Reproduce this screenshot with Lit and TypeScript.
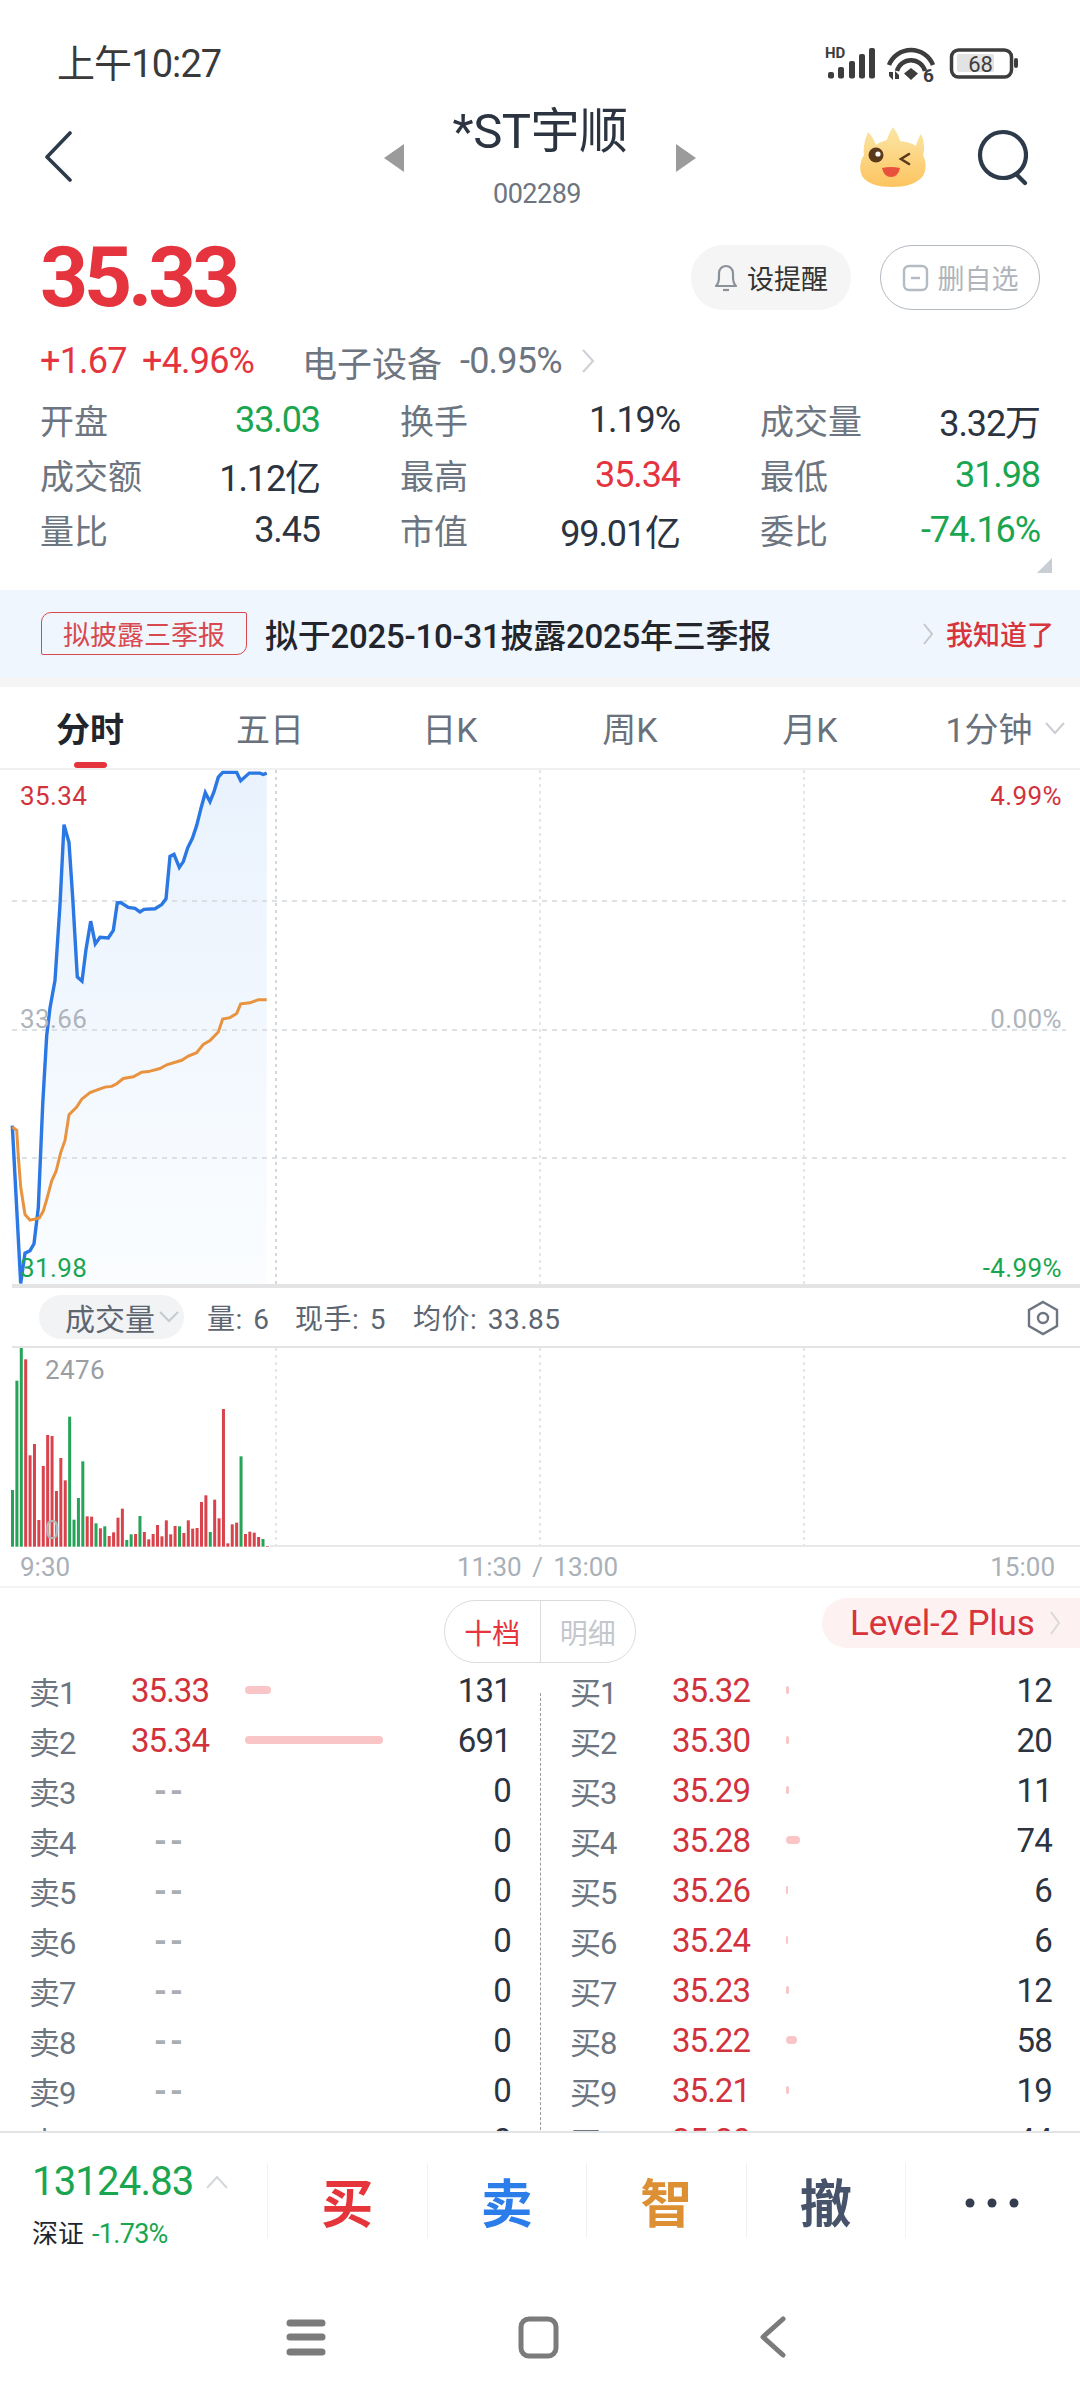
import { LitElement, html, css, svg } from 'lit';
import { customElement } from 'lit/decorators.js';

const RED = css`#e5343d`;
const GREEN = css`#1aa650`;

// traced off the reference, 1 unit = 1px horizontally, 2.904 units = 1px vertically from y=760
const pt = (p: number[]) => `${(p[0] / 3).toFixed(1)},${(760 + p[1] / 2.904).toFixed(1)}`;
const blue = [[37,1062],[62,1520],[75,1432],[90,1425],[102,1405],[115,1300],[128,1000],[140,800],[150,720],[165,640],[180,420],[192,188],[207,240],[218,400],[232,630],[246,642],[258,550],[272,468],[286,534],[300,515],[325,517],[340,495],[352,415],[362,414],[385,428],[405,431],[420,441],[432,434],[465,432],[485,420],[498,403],[510,280],[522,274],[538,312],[550,295],[563,255],[577,228],[590,190],[603,140],[616,95],[630,121],[642,92],[655,50],[668,36],[710,36],[722,60],[748,38],[780,38],[790,42],[800,38]];
const orange = [[37,1066],[50,1075],[55,1150],[62,1240],[75,1320],[90,1336],[105,1333],[118,1330],[130,1310],[142,1270],[155,1222],[168,1195],[182,1140],[195,1105],[207,1030],[230,1008],[245,985],[270,966],[300,955],[315,950],[335,948],[350,940],[370,925],[400,920],[425,907],[445,905],[480,896],[500,885],[545,872],[565,860],[590,850],[610,826],[630,815],[655,790],[668,752],[690,748],[710,736],[722,708],[750,705],[775,696],[800,696]];

// [top in zoom px, 1 = red / 0 = green]
const vols: [number, number][] = [[660,0],[332,0],[232,0],[268,1],[556,1],[522,1],[750,1],[588,1],[495,1],[498,1],[663,1],[564,1],[631,1],[440,0],[749,0],[684,0],[574,0],[739,1],[740,1],[760,0],[775,1],[769,0],[798,1],[787,1],[743,1],[716,1],[810,0],[793,0],[792,1],[738,0],[786,1],[808,1],[792,1],[765,1],[799,1],[751,1],[793,1],[768,1],[769,0],[789,1],[751,1],[776,1],[774,1],[696,1],[676,1],[786,0],[689,1],[745,1],[417,1],[820,1],[763,1],[758,1],[559,0],[792,1],[785,1],[788,1],[801,1],[807,0],[828,1]];

const stats = [
  ['开盘', '33.03', 'g'], ['换手', '1.19%', ''], ['成交量', '3.32万', ''],
  ['成交额', '1.12亿', ''], ['最高', '35.34', 'r'], ['最低', '31.98', 'g'],
  ['量比', '3.45', ''], ['市值', '99.01亿', ''], ['委比', '-74.16%', 'g'],
];

const asks: [string, number, number][] = [['35.33', 131, 26], ['35.34', 691, 138], ['--', 0, 0], ['--', 0, 0], ['--', 0, 0], ['--', 0, 0], ['--', 0, 0], ['--', 0, 0], ['--', 0, 0], ['--', 0, 0]];
const bids: [string, number, number][] = [['35.32', 12, 3], ['35.30', 20, 3], ['35.29', 11, 3], ['35.28', 74, 14], ['35.26', 6, 2], ['35.24', 6, 2], ['35.23', 12, 3], ['35.22', 58, 11], ['35.21', 19, 3], ['35.20', 44, 8]];

@customElement('app-root')
export class AppRoot extends LitElement {
  static styles = css`
    :host {
      display: flex;
      flex-direction: column;
      width: 1080px;
      height: 2400px;
      overflow: hidden;
      background: #fff;
      font-family: Roboto, "Noto Sans CJK SC", sans-serif;
      color: #2b3440;
    }
    svg { display: block; }
    .r { color: ${RED}; }
    .g { color: ${GREEN}; }

    .status {
      height: 92px;
      flex: none;
      display: flex;
      align-items: flex-start;
      justify-content: space-between;
      padding: 39px 60px 0 57px;
      box-sizing: border-box;
    }
    .clock { font-size: 38px; line-height: 46px; letter-spacing: -0.9px; color: #3a3a3a; margin-top: 2px; }
    .status svg { margin-top: -1px; }

    .nav {
      height: 130px;
      flex: none;
      position: relative;
      display: flex;
      align-items: flex-start;
      justify-content: center;
    }
    .nav .back { position: absolute; left: 42px; top: 38px; }
    .nav .tools { position: absolute; left: 855px; top: 32px; display: flex; gap: 42px; align-items: flex-start; }
    .titlewrap { display: flex; align-items: flex-start; margin-top: 12px; }
    .tri { margin-top: 40px; }
    .title { text-align: center; width: 272px; }
    .title b { display: block; font-weight: 400; font-size: 49px; line-height: 56px; letter-spacing: -0.5px; color: #2b3440; }
    .title span { display: block; font-size: 27px; line-height: 30px; margin-top: 19px; margin-right: 6px; color: #6d7580; letter-spacing: -0.5px; }

    .pricerow {
      height: 113px;
      flex: none;
      display: flex;
      justify-content: space-between;
      padding: 23px 40px 0;
      box-sizing: border-box;
    }
    .price { font-size: 84px; line-height: 66px; font-weight: 700; color: ${RED}; letter-spacing: -4.2px; }
    .btns { display: flex; gap: 29px; }
    .btn {
      width: 160px;
      height: 65px;
      border-radius: 32px;
      box-sizing: border-box;
      display: flex;
      align-items: center;
      justify-content: center;
      gap: 9px;
      font-size: 27px;
    }
    .btn.on { background: #f5f5f5; color: #333; }
    .btn.off { border: 1.5px solid #b4bbc2; color: #b0b5bb; }

    .change { height: 52px; flex: none; display: flex; align-items: center; padding: 0 0 0 40px; font-size: 36px; letter-spacing: -0.8px; }
    .change .m1 { width: 102px; }
    .change .m2 { width: 160px; }
    .change .sec { color: #6d7580; font-size: 35px; letter-spacing: 0; }
    .change .pct { color: #6d7580; margin-left: 18px; }
    .change svg { margin-left: 18px; }

    .stats {
      flex: none;
      height: 203px;
      position: relative;
      box-sizing: border-box;
      padding: 5px 40px 0;
      display: grid;
      grid-template-columns: repeat(3, 280px);
      grid-auto-rows: 55px;
      column-gap: 80px;
    }
    .stat { display: flex; justify-content: space-between; align-items: center; font-size: 34px; }
    .stat .k { color: #6d7580; }
    .stat .v { font-size: 36px; letter-spacing: -1.1px; color: #2b3440; }
    .stat .v.r { color: ${RED}; }
    .stat .v.g { color: ${GREEN}; }
    .corner { position: absolute; right: 28px; top: 171px; }

    .notice {
      height: 87px;
      flex: none;
      background: #f0f6fd;
      display: flex;
      align-items: center;
      padding: 0 26px 0 41px;
      position: relative;
    }
    .tag {
      width: 206px;
      height: 43px;
      box-sizing: border-box;
      border: 1.5px solid #d8494f;
      border-radius: 10px 2px 10px 2px;
      color: #d8494f;
      font-size: 27px;
      display: flex;
      align-items: center;
      justify-content: center;
    }
    .ntext { margin-left: 18px; font-size: 33px; letter-spacing: -0.25px; font-weight: 500; color: #22262c; flex: 1; }
    .nok { font-size: 27px; color: #d8343c; margin-left: 12px; font-weight: 500; }
    .gap { height: 10px; flex: none; background: #f5f5f5; }

    .tabs {
      height: 83px;
      flex: none;
      display: grid;
      grid-template-columns: repeat(6, 1fr);
      align-items: center;
      font-size: 34px;
      color: #69717c;
      position: relative;
      border-bottom: 2px solid #f0f0f0;
      box-sizing: border-box;
    }
    .tabs > div { text-align: center; display: flex; justify-content: center; align-items: center; gap: 12px; }
    .tabs .cur { color: #22262c; font-weight: 700; }
    .tabs .last { padding-left: 30px; }
    .tabs .ul { position: absolute; left: 74px; bottom: 0; width: 33px; height: 6px; border-radius: 3px; background: ${RED}; }

    .chart { height: 516px; flex: none; position: relative; }
    .lbl { position: absolute; font-size: 26px; line-height: 30px; letter-spacing: 0.4px; }
    .lbl.gray { color: #aeb4bb; }
    .lbl.red { color: #d2323c; }
    .lbl.grn { color: ${GREEN}; }

    .sub {
      height: 62px;
      flex: none;
      box-sizing: border-box;
      border-top: 2px solid #e4e4e4;
      border-bottom: 2px solid #e4e4e4;
      margin-left: 12px;
      display: flex;
      align-items: center;
      position: relative;
      font-size: 28px;
      letter-spacing: 0.5px;
      word-spacing: 3px;
      color: #5c6570;
    }
    .pill {
      margin-left: 27px;
      margin-right: 23px;
      width: 145px;
      height: 44px;
      border-radius: 22px;
      background: #f2f3f5;
      font-size: 30px;
      letter-spacing: 0;
      display: flex;
      align-items: center;
      justify-content: flex-end;
      gap: 3px;
      padding-right: 4px;
      box-sizing: border-box;
    }
    .sub .a { width: 88px; }
    .sub .b { width: 118px; }
    .sub svg.hex { position: absolute; right: 20px; top: 12px; }

    .vol { height: 199px; flex: none; position: relative; }
    .axis {
      height: 41px;
      flex: none;
      border-bottom: 2px solid #f3f3f3;
      display: grid;
      grid-template-columns: 1fr auto 1fr;
      align-items: center;
      padding: 0 25px 0 20px;
      font-size: 26px;
      color: #a9b0b8;
      box-sizing: border-box;
    }
    .axis .mid { word-spacing: 4px; }
    .axis .end { text-align: right; }

    .orders { height: 543px; flex: none; overflow: hidden; position: relative; }
    .ohead { height: 77px; position: relative; display: flex; justify-content: center; align-items: flex-start; }
    .seg {
      margin-top: 12px;
      width: 192px;
      height: 63px;
      box-sizing: border-box;
      border: 1.5px solid #dcdcdc;
      border-radius: 31px;
      display: flex;
      font-size: 28px;
    }
    .seg div { flex: 1; display: flex; align-items: center; justify-content: center; color: #c4c7cb; }
    .seg div:first-child { color: ${RED}; border-right: 1.5px solid #dcdcdc; }
    .level {
      position: absolute;
      right: 0;
      top: 10px;
      width: 258px;
      height: 50px;
      border-radius: 25px 0 0 25px;
      background: #fdf1f1;
      color: #d8343c;
      font-size: 35px;
      box-sizing: border-box;
      padding-left: 28px;
      display: flex;
      align-items: center;
      gap: 14px;
      letter-spacing: -0.2px;
    }
    .book { display: grid; grid-template-columns: 540px 540px; position: relative; }
    .side { display: flex; flex-direction: column; }
    .row {
      height: 50px;
      flex: none;
      display: grid;
      grid-template-columns: 101px 80px 35px 1fr auto;
      align-items: center;
      font-size: 33px;
    }
    .side.l .row { padding: 0 29px 0 29px; }
    .side.r .row { padding: 0 28px 0 30px; }
    .row .n { color: #6d7580; font-size: 31px; letter-spacing: -1px; }
    .row .p { color: #d2323c; text-align: center; letter-spacing: -1px; }
    .row .p.e { color: #a9aeb4; letter-spacing: 3px; font-weight: 700; }
    .row .q { color: #2b3440; text-align: right; letter-spacing: -0.8px; }
    .row .bar { height: 8px; border-radius: 4px; background: #f9c5c7; }
    .dash { position: absolute; left: 540px; top: 28px; bottom: 0; border-left: 1.5px dashed #9a9a9a; }

    .bottom { flex: 1; position: relative; border-top: 2px solid #e2e4e6; box-sizing: border-box; }
    .trade { height: 137px; display: flex; align-items: flex-start; padding-top: 30px; box-sizing: border-box; }
    .idx { width: 267px; flex: none; box-sizing: border-box; padding-left: 32px; margin-top: -3px; }
    .idx .top { display: flex; align-items: center; gap: 12px; font-size: 40px; line-height: 44px; letter-spacing: -0.8px; color: ${GREEN}; }
    .idx .lo { display: flex; align-items: baseline; gap: 8px; margin-top: 15px; font-size: 26px; line-height: 30px; color: #22262c; }
    .idx .lo span { color: ${GREEN}; font-size: 27px; letter-spacing: -0.7px; }
    .act {
      width: 159.5px;
      height: 75px;
      flex: none;
      border-left: 1.5px solid #f2f2f2;
      display: flex;
      align-items: center;
      justify-content: center;
      font-size: 52px;
      font-weight: 700;
      box-sizing: border-box;
    }
    .act.more { padding: 4px 0 0 14px; }
    .sys { display: flex; height: 130px; align-items: flex-start; position: relative; }
  `;

  private chartSvg() {
    const line = blue.map(pt).join(' ');
    const last = pt(blue[blue.length - 1]).split(',')[0];
    const grid = [540, 804].map(x => svg`<line x1=${x} x2=${x} y1="770" y2="1286" stroke="#dcdfe2" stroke-width="1.5" stroke-dasharray="3 4"/>`);
    return html`<svg width="1080" height="516" viewBox="0 770 1080 516">
      <defs><linearGradient id="fill" x1="0" y1="0" x2="0" y2="1">
        <stop offset="0" stop-color="#e9f2fd"/><stop offset="1" stop-color="#fbfdff"/>
      </linearGradient></defs>
      <polygon points="${line} ${last},1286 12,1286" fill="url(#fill)"/>
      ${[901, 1030, 1158].map(y => svg`<line x1="12" x2="1066" y1=${y} y2=${y} stroke="#d3d7db" stroke-width="1.5" stroke-dasharray="5 5"/>`)}
      <line x1="276" x2="276" y1="770" y2="1286" stroke="#d5d8db" stroke-width="2" stroke-dasharray="3 4"/>
      ${grid}
      <polyline points=${line} fill="none" stroke="#2b78e4" stroke-width="3.4"/>
      <polyline points=${orange.map(pt).join(' ')} fill="none" stroke="#e8933f" stroke-width="3"/>
      <line x1="12" x2="1080" y1="1285" y2="1285" stroke="#e4e4e4" stroke-width="2"/>
    </svg>`;
  }

  private volSvg() {
    return html`<svg width="1080" height="199" viewBox="0 1348 1080 199">
      ${[276, 540, 804].map(x => svg`<line x1=${x} x2=${x} y1="1348" y2="1547" stroke="#dcdfe2" stroke-width="1.5" stroke-dasharray="3 4"/>`)}
      ${vols.map(([top, up], i) => {
        const y = 1270 + top / 3;
        return svg`<rect x=${11 + i * 4.395} y=${y} width="3" height=${1546.7 - y} fill=${up ? '#d8434c' : '#28a35a'}/>`;
      })}
      <line x1="270" x2="1080" y1="1546" y2="1546" stroke="#e8e8e8" stroke-width="2"/>
    </svg>`;
  }

  private side(rows: [string, number, number][], name: string, cls: string) {
    return html`<div class="side ${cls}">
      ${rows.map(([p, q, w], i) => html`<div class="row">
        <div class="n">${name}${i + 1}</div>
        <div class="p ${p === '--' ? 'e' : ''}">${p}</div>
        <div></div>
        <div><div class="bar" style="width:${w}px"></div></div>
        <div class="q">${q}</div>
      </div>`)}
    </div>`;
  }

  render() {
    return html`
      <div class="status">
        <div class="clock">上午10:27</div>
        <svg width="200" height="50" viewBox="820 38 200 50">
          <text x="825" y="58" font-family="Roboto" font-weight="700" font-size="15" fill="#3d3d3d">HD</text>
          <g fill="#3d3d3d">
            <rect x="828" y="72" width="6" height="6.5" rx="2"/>
            <rect x="838" y="67" width="6" height="11.5" rx="2"/>
            <rect x="849" y="61" width="6" height="17.5" rx="2"/>
            <rect x="859" y="54" width="6" height="24.5" rx="2"/>
            <rect x="869" y="48" width="6" height="30.5" rx="2"/>
            <polygon points="904,73.5 911,68 918,73.5 911,80"/>
            <polygon points="889,72 893,72 893,80 889,76"/>
            <polygon points="895,71 899,75 899,79 895,79"/>
          </g>
          <g fill="none" stroke="#3d3d3d" stroke-width="4.5">
            <path d="M889 65 A23.6 23.6 0 0 1 933 65"/>
            <path d="M897 71 A14.5 14.5 0 0 1 925 71"/>
            <rect x="951.5" y="50" width="60" height="27" rx="7" stroke-width="3.5"/>
          </g>
          <text x="923" y="82" font-family="Roboto" font-weight="700" font-size="19" fill="#3d3d3d">6</text>
          <rect x="957" y="54" width="37" height="18" rx="2" fill="#e3e3e3"/>
          <text x="980.5" y="72" text-anchor="middle" font-family="Roboto" font-size="22" fill="#3d3d3d">68</text>
          <rect x="1014" y="58" width="4" height="10" rx="2" fill="#3d3d3d"/>
        </svg>
      </div>

      <div class="nav">
        <svg class="back" width="34" height="52" viewBox="0 0 34 52" fill="none" stroke="#2d3a4a" stroke-width="3.6" stroke-linecap="round" stroke-linejoin="round">
          <path d="M28 3 L5 27 L28 50"/>
        </svg>
        <div class="titlewrap">
          <svg class="tri" width="20" height="28" viewBox="0 0 20 28"><polygon points="20,0 20,28 0,14" fill="#9b9b9b"/></svg>
          <div class="title"><b>*ST宇顺</b><span>002289</span></div>
          <svg class="tri" width="20" height="28" viewBox="0 0 20 28"><polygon points="0,0 0,28 20,14" fill="#9b9b9b"/></svg>
        </div>
        <div class="tools">
          <svg width="75" height="65" viewBox="855 125 75 65">
            <defs><linearGradient id="bd" x1="0" y1="0" x2="0" y2="1">
              <stop offset="0" stop-color="#fbe6a6"/><stop offset="1" stop-color="#fdc460"/>
            </linearGradient></defs>
            <path fill="url(#bd)" d="M893 128 C896 132 899 137 900 142 C906 143 912 144 916 147 C917 142 919 138 921 135 C924 141 925 150 923 156 C927 164 926 172 923 177 C917 185 905 188 892 188 C879 188 867 185 862 177 C859 170 860 162 864 156 C863 149 865 139 868 133 C872 137 874 141 876 146 C880 143 884 142 887 141 C888 137 890 132 893 128 Z"/>
            <circle cx="876" cy="156" r="7.5" fill="#5b3a1c"/>
            <circle cx="878" cy="155" r="2.6" fill="#fff"/>
            <path d="M909 155 L901 160 L909 165" fill="none" stroke="#5b3a1c" stroke-width="2.6" stroke-linecap="round"/>
            <path d="M882 169 Q891 167 900 169 Q898 178 891 178 Q884 178 882 169 Z" fill="#e8513c"/>
          </svg>
          <svg width="56" height="65" viewBox="972 125 56 65" fill="none" stroke="#2d3a4a" stroke-width="4.2" stroke-linecap="round">
            <circle cx="1003" cy="156" r="23"/>
            <path d="M1016 175 L1025 184"/>
          </svg>
        </div>
      </div>

      <div class="pricerow">
        <div class="price">35.33</div>
        <div class="btns">
          <div class="btn on">
            <svg width="24" height="30" viewBox="0 0 24 30" fill="none" stroke="#8b9198" stroke-width="2.2" stroke-linejoin="round">
              <path d="M2 23 Q5 20 5 14 V10 A7 7 0 0 1 19 10 V14 Q19 20 22 23 Z"/><path d="M9 27 H15"/>
            </svg>设提醒
          </div>
          <div class="btn off">
            <svg width="27" height="30" viewBox="0 0 27 30" fill="none" stroke="#b4bbc2" stroke-width="2.4">
              <rect x="2" y="3" width="23" height="24" rx="5"/><path d="M9 15 H18"/>
            </svg>删自选
          </div>
        </div>
      </div>

      <div class="change">
        <span class="r m1">+1.67</span><span class="r m2">+4.96%</span>
        <span class="sec">电子设备</span><span class="pct">-0.95%</span>
        <svg width="16" height="26" viewBox="0 0 16 26" fill="none" stroke="#cfd2d6" stroke-width="2.2"><path d="M3 2 L13 13 L3 24"/></svg>
      </div>

      <div class="stats">
        ${stats.map(([k, v, c]) => html`<div class="stat"><span class="k">${k}</span><span class="v ${c}">${v}</span></div>`)}
        <svg class="corner" width="15" height="15" viewBox="0 0 15 15"><polygon points="15,0 15,15 0,15" fill="#c9ced4"/></svg>
      </div>

      <div class="notice">
        <div class="tag">拟披露三季报</div>
        <div class="ntext">拟于2025-10-31披露2025年三季报</div>
        <svg width="12" height="24" viewBox="0 0 12 24" fill="none" stroke="#c4c8cc" stroke-width="2"><path d="M2 2 L10 12 L2 22"/></svg>
        <div class="nok">我知道了</div>
      </div>
      <div class="gap"></div>

      <div class="tabs">
        <div class="cur">分时</div><div>五日</div><div>日K</div><div>周K</div><div>月K</div>
        <div class="last">1分钟
          <svg width="20" height="12" viewBox="0 0 20 12" fill="none" stroke="#c9ced4" stroke-width="2"><path d="M1 1 L10 11 L19 1"/></svg>
        </div>
        <div class="ul"></div>
      </div>

      <div class="chart">
        ${this.chartSvg()}
        <div class="lbl red" style="left:20px;top:11px">35.34</div>
        <div class="lbl gray" style="left:20px;top:234px">33.66</div>
        <div class="lbl grn" style="left:20px;top:483px">31.98</div>
        <div class="lbl red" style="right:18px;top:11px">4.99%</div>
        <div class="lbl gray" style="right:18px;top:234px">0.00%</div>
        <div class="lbl grn" style="right:18px;top:483px">-4.99%</div>
      </div>

      <div class="sub">
        <div class="pill">成交量
          <svg width="22" height="12" viewBox="0 0 22 12" fill="none" stroke="#c6cacf" stroke-width="2"><path d="M2 1 L11 10 L20 1"/></svg>
        </div>
        <span class="a">量: 6</span><span class="b">现手: 5</span><span class="c">均价: 33.85</span>
        <svg class="hex" width="34" height="36" viewBox="0 0 34 36" fill="none" stroke="#6d7580" stroke-width="2.4">
          <path d="M17 2 L31 10 V26 L17 34 L3 26 V10 Z"/><circle cx="17" cy="18" r="5"/>
        </svg>
      </div>

      <div class="vol">
        ${this.volSvg()}
        <div class="lbl" style="left:45px;top:7px;color:#9a9ea3">2476</div>
        <div class="lbl" style="left:45px;top:167px;color:#b5b5b5">0</div>
      </div>

      <div class="axis"><span>9:30</span><span class="mid">11:30 / 13:00</span><span class="end">15:00</span></div>

      <div class="orders">
        <div class="ohead">
          <div class="seg"><div>十档</div><div>明细</div></div>
          <div class="level">Level-2 Plus
            <svg width="12" height="26" viewBox="0 0 12 26" fill="none" stroke="#d9d9d9" stroke-width="2"><path d="M2 2 L10 13 L2 24"/></svg>
          </div>
        </div>
        <div class="book">
          ${this.side(asks, '卖', 'l')}
          ${this.side(bids, '买', 'r')}
          <div class="dash"></div>
        </div>
      </div>

      <div class="bottom">
        <div class="trade">
          <div class="idx">
            <div class="top">13124.83
              <svg width="22" height="14" viewBox="0 0 22 14" fill="none" stroke="#d4d7da" stroke-width="2"><path d="M1 13 L11 2 L21 13"/></svg>
            </div>
            <div class="lo">深证<span>-1.73%</span></div>
          </div>
          <div class="act" style="color:#e5343a">买</div>
          <div class="act" style="color:#2b7de9">卖</div>
          <div class="act" style="color:#dd8f33">智</div>
          <div class="act" style="color:#47536b">撤</div>
          <div class="act more">
            <svg width="56" height="12" viewBox="0 0 56 12" fill="#333d4d"><circle cx="6" cy="6" r="4.5"/><circle cx="28" cy="6" r="4.5"/><circle cx="50" cy="6" r="4.5"/></svg>
          </div>
        </div>
        <div class="sys">
          <svg width="1080" height="130" viewBox="0 2268 1080 130" fill="none" stroke="#7b7b7b" stroke-linecap="round" stroke-linejoin="round">
            <path d="M290 2321 H322 M290 2335 H322 M290 2350 H322" stroke-width="7"/>
            <rect x="521" y="2317" width="35" height="37" rx="8" stroke-width="5"/>
            <path d="M783 2317 L763 2335 L783 2353" stroke-width="5"/>
          </svg>
        </div>
      </div>
    `;
  }
}
